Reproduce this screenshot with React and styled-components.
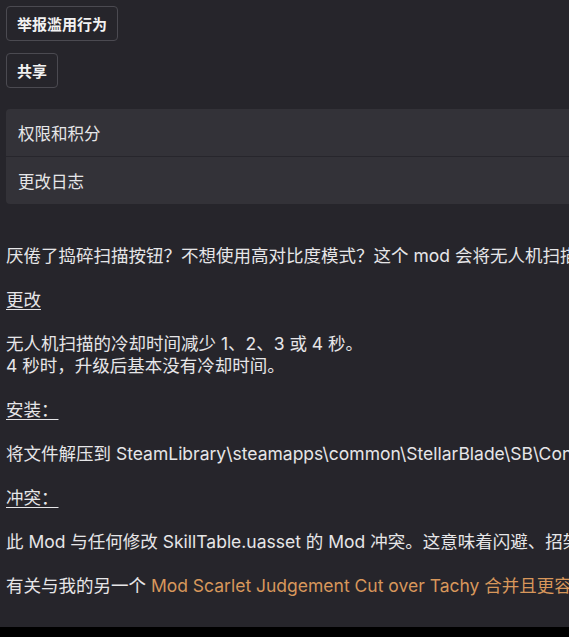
import React from "react";
import styled, { createGlobalStyle } from "styled-components";

const GlobalStyle = createGlobalStyle`
  html, body {
    margin: 0;
    padding: 0;
    background: #000;
    overflow: hidden;
  }
  body {
    font-family: "Inter", "Noto Sans CJK SC", sans-serif;
    -webkit-font-smoothing: antialiased;
  }
`;

const Page = styled.div`
  width: 100vw;
  height: 627px;
  background: #26252b;
  overflow: hidden;
`;

const Content = styled.div`
  width: 1200px;
  padding: 6px 0 0 6px;
  display: flex;
  flex-direction: column;
  align-items: flex-start;
`;

const Button = styled.button`
  height: 35px;
  padding: 0 10px;
  margin-bottom: ${(p) => p.$mb || 0}px;
  background: transparent;
  border: 1px solid #4b4a51;
  border-radius: 4px;
  color: #f2f2f2;
  font-family: inherit;
  font-size: 15px;
  font-weight: 700;
  display: flex;
  align-items: center;
  cursor: pointer;
`;

const Accordion = styled.div`
  align-self: stretch;
  background: #333238;
  border-radius: 4px;
  display: flex;
  flex-direction: column;
`;

const AccordionRow = styled.div`
  height: 47px;
  padding-left: 12px;
  display: flex;
  align-items: center;
  color: #e6e6e8;
  font-size: 16.5px;
  & + & {
    border-top: 1px solid #27262c;
  }
`;

const Description = styled.div`
  margin-top: 41px;
  display: flex;
  flex-direction: column;
  gap: 22px;
  color: #e6e6e8;
  font-size: 17.5px;
  line-height: 22px;
`;

const Para = styled.p`
  margin: 0;
  white-space: nowrap;
`;

const Heading = styled.u`
  text-underline-offset: 3px;
`;

const Link = styled.a`
  color: #d8975b;
  text-decoration: none;
`;

const Bottom = styled.div`
  height: 10px;
  background: #000;
`;

export default function App() {
  return (
    <>
      <GlobalStyle />
      <Page>
        <Content>
          <Button $mb={12}>举报滥用行为</Button>
          <Button $mb={21}>共享</Button>
          <Accordion>
            <AccordionRow>权限和积分</AccordionRow>
            <AccordionRow>更改日志</AccordionRow>
          </Accordion>
          <Description>
            <Para>厌倦了捣碎扫描按钮？不想使用高对比度模式？这个 mod 会将无人机扫描的冷却时间缩短。</Para>
            <Para>
              <Heading>更改</Heading>
            </Para>
            <Para>
              无人机扫描的冷却时间减少 1、2、3 或 4 秒。
              <br />4 秒时，升级后基本没有冷却时间。
            </Para>
            <Para>
              <Heading>安装：</Heading>
            </Para>
            <Para>将文件解压到 SteamLibrary\steamapps\common\StellarBlade\SB\Content\Paks\~mods</Para>
            <Para>
              <Heading>冲突：</Heading>
            </Para>
            <Para>此 Mod 与任何修改 SkillTable.uasset 的 Mod 冲突。这意味着闪避、招架等相关 Mod。</Para>
            <Para>
              有关与我的另一个 <Link href="#">Mod Scarlet Judgement Cut over Tachy 合并且更容易安装的版本</Link>
            </Para>
          </Description>
        </Content>
      </Page>
      <Bottom />
    </>
  );
}
